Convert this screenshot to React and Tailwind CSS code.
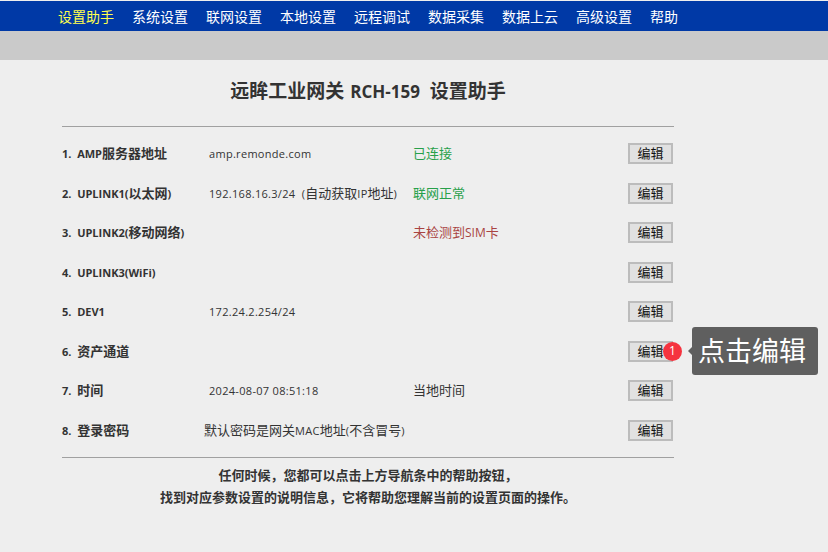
const NAV = ["设置助手", "系统设置", "联网设置", "本地设置", "远程调试", "数据采集", "数据上云", "高级设置", "帮助"];

const ROWS = [
  { label: "1.  AMP服务器地址", value: "amp.remonde.com", status: "已连接", color: "text-[#27a04a]" },
  { label: "2.  UPLINK1(以太网)", value: "192.168.16.3/24  (自动获取IP地址)", status: "联网正常", color: "text-[#27a04a]" },
  { label: "3.  UPLINK2(移动网络)", status: "未检测到SIM卡", color: "text-[#a94442]" },
  { label: "4.  UPLINK3(WiFi)" },
  { label: "5.  DEV1", value: "172.24.2.254/24" },
  { label: "6.  资产通道", hint: true },
  { label: "7.  时间", value: "2024-08-07 08:51:18", status: "当地时间", color: "text-[#333]" },
  { label: "8.  登录密码", value: "默认密码是网关MAC地址(不含冒号)", shift: true },
];

// latin runs are set smaller than the chinese ones
function Mixed({ text, latin = "text-[11px]" }) {
  const parts = text.match(/[\x00-\x7f]+|[^\x00-\x7f]+/g) || [];
  return parts.map((part, i) =>
    /^[\x00-\x7f]/.test(part) ? (
      <span key={i} className={latin}>
        {part}
      </span>
    ) : (
      <span key={i}>{part}</span>
    ),
  );
}

function Row({ row }) {
  return (
    <div className="flex h-[39.5px] items-center">
      <div className="w-[147px] whitespace-pre text-[13px] font-bold text-[#333]">
        <Mixed text={row.label} />
      </div>
      <div className={`${row.shift ? "-ml-[5px] w-[209px]" : "w-[204px]"} whitespace-pre text-[13px] text-[#333]`}>
        {row.value && <Mixed text={row.value} latin="text-[11px] tracking-[0.3px]" />}
      </div>
      <div className={`flex-1 text-[13px] ${row.color}`}>
        {row.status && <Mixed text={row.status} latin="text-[12px]" />}
      </div>
      <div className="relative mr-px flex">
        <button className="h-[21px] w-[45px] border-2 border-[#bcbcbc] bg-[#e1e1e1] text-[13px] leading-none text-[#111]">
          编辑
        </button>
        {row.hint && (
          <>
            <span className="absolute left-[35px] top-[1px] flex h-[19px] w-[19px] items-center justify-center rounded-full bg-[#f5333f] text-[12px] text-white">
              1
            </span>
            <div className="absolute left-[64px] top-[-14px] flex h-[48px] w-[126px] items-center rounded-[3px] bg-[#5f5f5f] pl-[6px] text-[27px] whitespace-nowrap text-white">
              点击编辑
              <span className="absolute left-[-4px] top-[20px] h-0 w-0 border-y-[4px] border-r-[4px] border-y-transparent border-r-[#5f5f5f]" />
            </div>
          </>
        )}
      </div>
    </div>
  );
}

export default function App() {
  return (
    <div className="h-[552px] w-[828px] overflow-hidden bg-[#eeeeee] font-['Open_Sans','Noto_Sans_CJK_SC',sans-serif]">
      <nav className="mt-px flex h-[30px] items-center gap-[18px] bg-[#0039a6] pl-[58px] text-[14px] text-white">
        {NAV.map((item, i) => (
          <span key={item} className={i === 0 ? "text-[#ffff4d]" : ""}>
            {item}
          </span>
        ))}
      </nav>
      <div className="h-[29px] bg-[#cacaca]" />
      <main className="mx-[62px] w-[612px]">
        <h1 className="mt-[17px] h-[49px] whitespace-pre text-center text-[19px] leading-[28px] font-bold text-[#333]">
          远眸工业网关 <span className="ml-[1px] mr-[1px] text-[17px] font-bold">RCH-159  </span>设置助手
        </h1>
        <div className="border-t border-[#a0a0a0] pt-[7px] pb-[8px]">
          {ROWS.map((row) => (
            <Row key={row.label} row={row} />
          ))}
        </div>
        <div className="-mt-px border-t border-[#a0a0a0] pt-[6px] text-center text-[13px] leading-[22px] font-bold text-[#333]">
          <p>任何时候，您都可以点击上方导航条中的帮助按钮，</p>
          <p>找到对应参数设置的说明信息，它将帮助您理解当前的设置页面的操作。</p>
        </div>
      </main>
    </div>
  );
}
